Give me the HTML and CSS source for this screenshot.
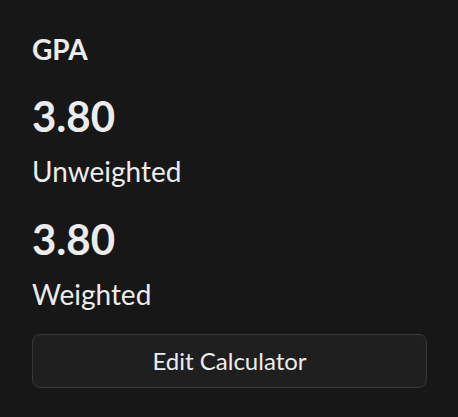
FILE: index.html
```html
<!DOCTYPE html>
<html>
<head>
<meta charset="utf-8">
<link rel="stylesheet" href="styles.css">
</head>
<body>
<div class="card">
  <h2 class="title">GPA</h2>
  <div class="stat">
    <div class="value">3.80</div>
    <div class="label">Unweighted</div>
  </div>
  <div class="stat stat-next">
    <div class="value">3.80</div>
    <div class="label">Weighted</div>
  </div>
  <button class="btn">Edit Calculator</button>
</div>
</body>
</html>
```
FILE: styles.css
```css
html, body {
  margin: 0;
  background: #171717;
}
body {
  font-family: Lato, "Noto Sans", sans-serif;
  color: #ececec;
}
.card {
  padding: 32px 31px 0 32px;
  display: flex;
  flex-direction: column;
}
.title {
  margin: 0;
  font-size: 28px;
  font-weight: 700;
  line-height: 34px;
}
.stat {
  display: flex;
  flex-direction: column;
  margin-top: 25px;
}
.stat-next {
  margin-top: 26px;
}
.value {
  font-size: 42px;
  font-weight: 700;
  line-height: 50px;
}
.label {
  font-size: 28px;
  line-height: 34px;
  margin-top: 13px;
}
.btn {
  margin-top: 23px;
  height: 54px;
  padding: 0 0 2px;
  background: #1f1f1f;
  border: 1px solid #383838;
  border-radius: 8px;
  color: #ececec;
  font-family: Lato, "Noto Sans", sans-serif;
  font-size: 24px;
}
```
